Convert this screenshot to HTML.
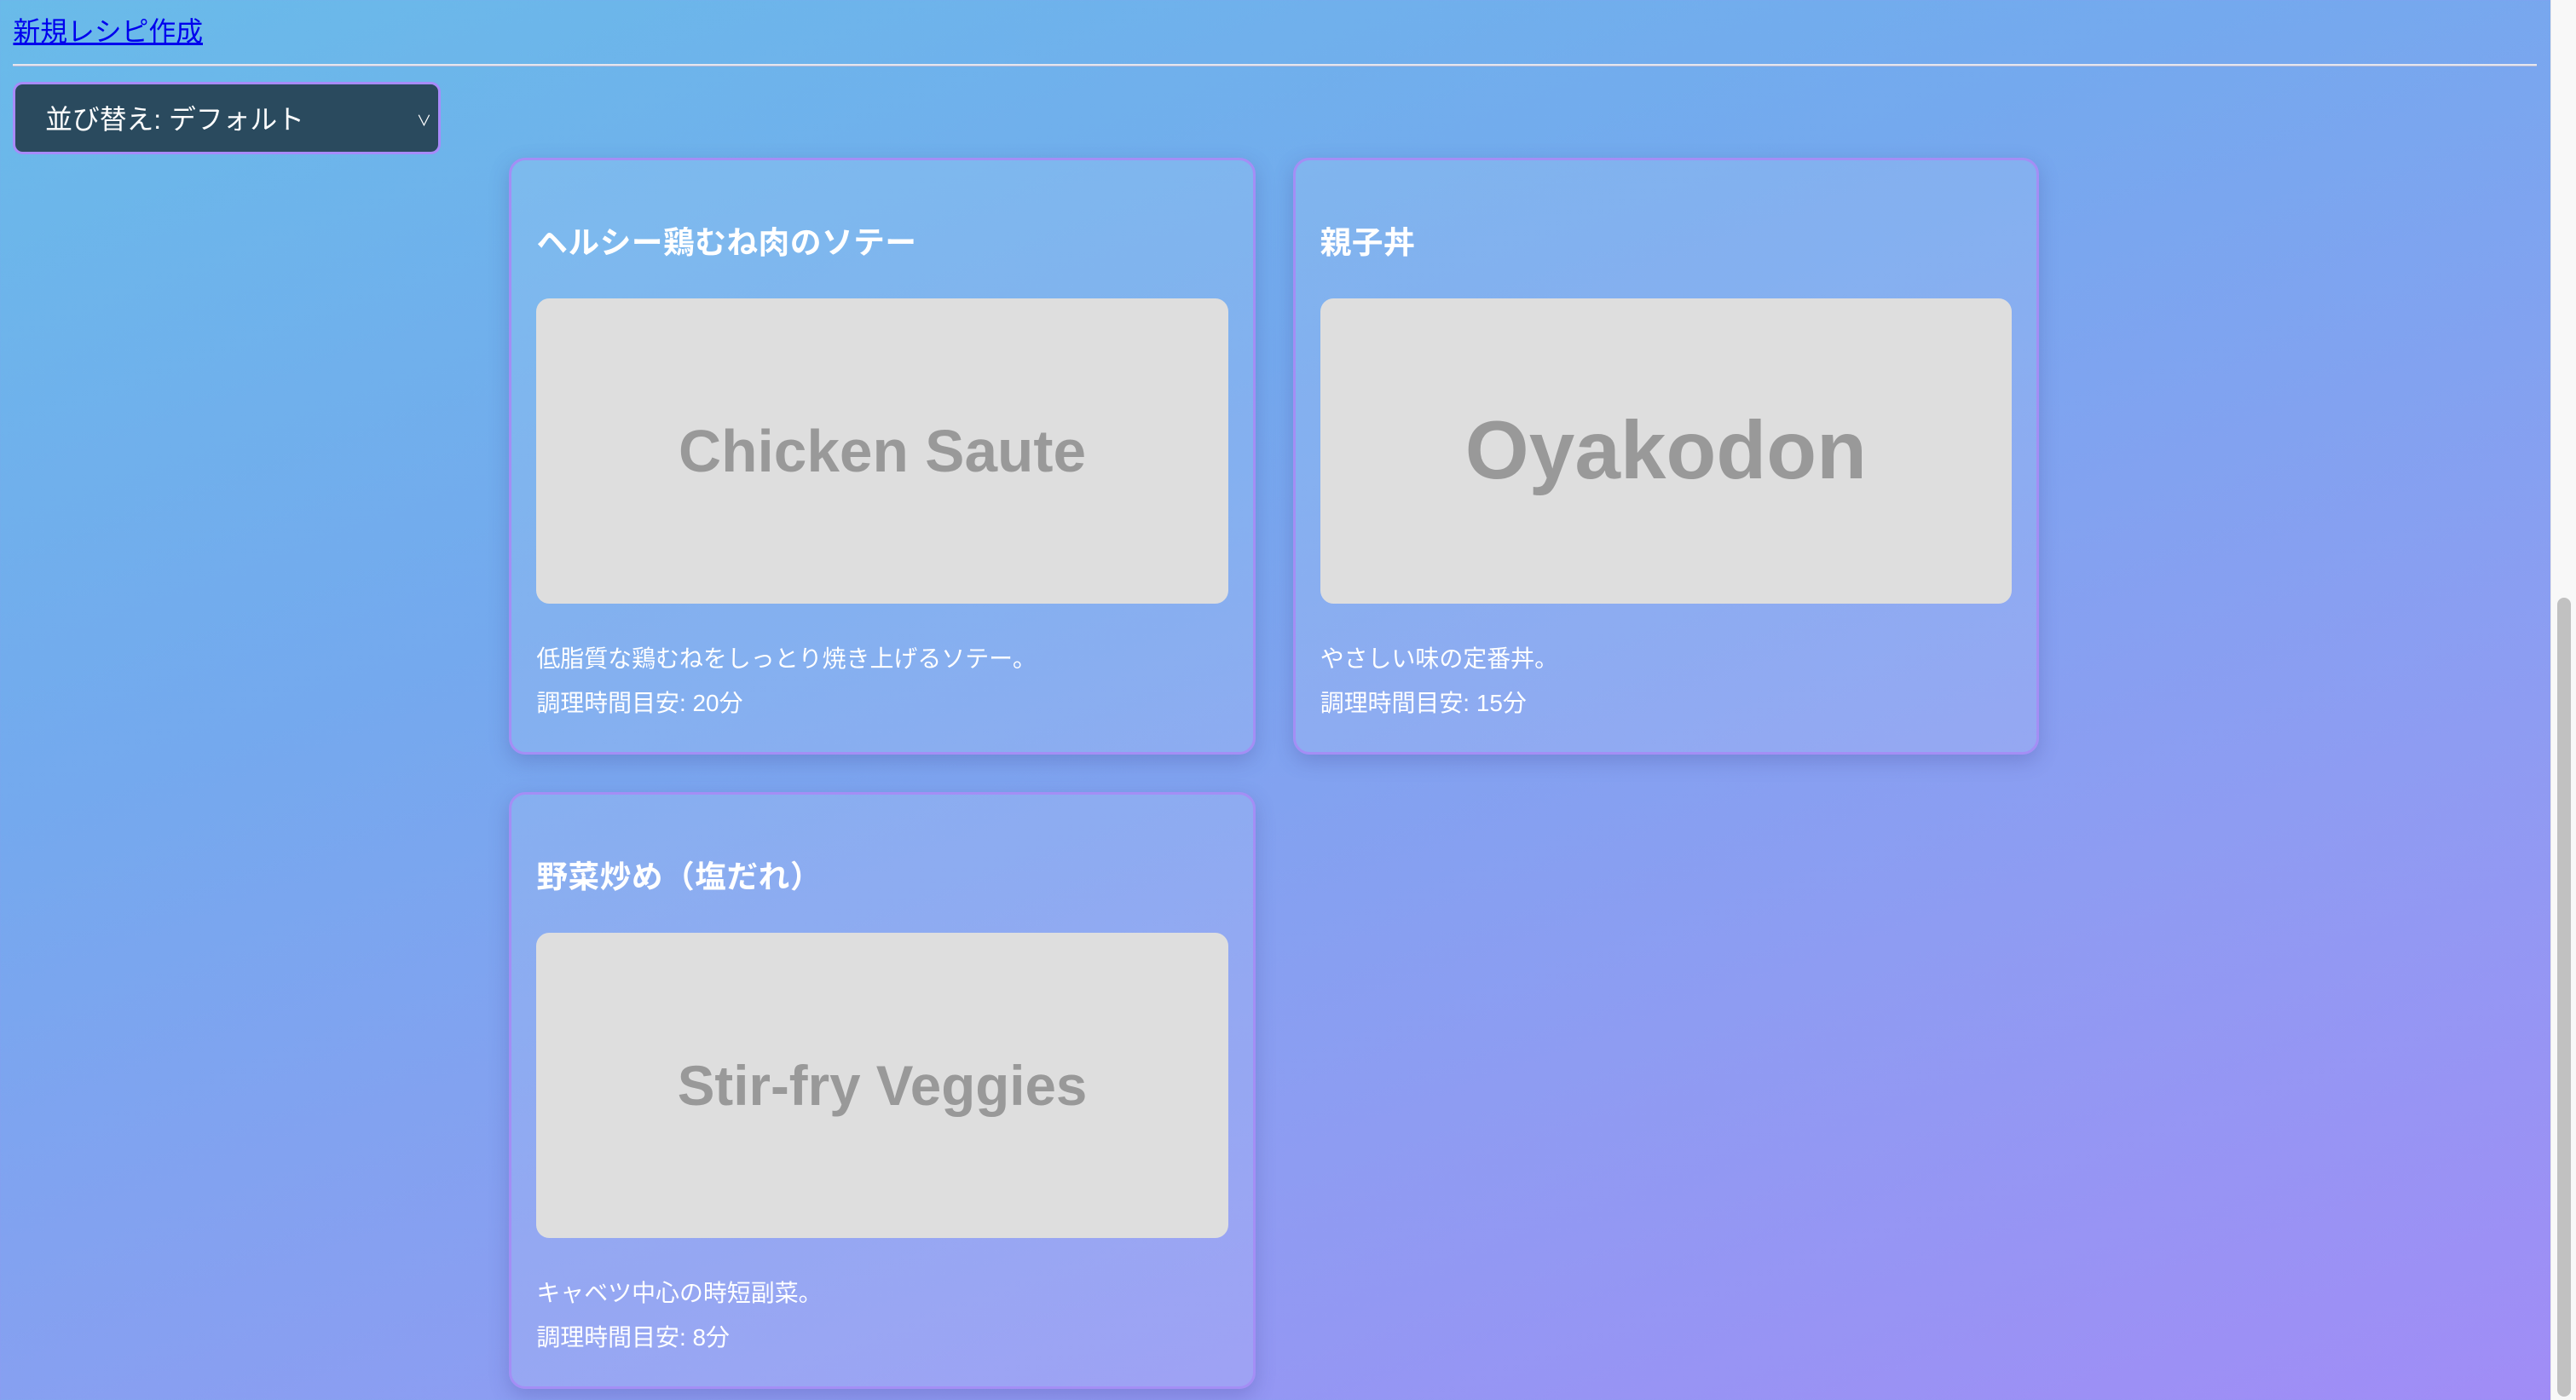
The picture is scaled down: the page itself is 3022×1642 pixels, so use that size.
<!DOCTYPE html>
<html><head><meta charset="utf-8"><style>
html,body{margin:0;padding:0;width:3022px;height:1642px;overflow:hidden}
body{background:linear-gradient(160deg,#69bbe9 0%,#74a9ee 35%,#8e9cf2 70%,#a18cf6 100%);font-family:"Liberation Sans","Noto Sans CJK JP",sans-serif;position:relative}
#z{zoom:1.9273;position:absolute;left:0;top:0;width:1552px;height:852px}
a{position:absolute;left:8px;top:6px;color:#0000ee;font-size:16.5px;text-decoration:underline}
.hr{position:absolute;left:8px;top:39px;width:1536px;height:1px;background:#e6e6ee;border-bottom:1px solid #b0b8d8}
.sel{position:absolute;left:8px;top:50px;width:257px;height:41px;background:#2a4a5e;border:2px solid #a78bfa;border-radius:6px;color:#fff;font-size:16.5px}
.sel span{position:absolute;left:18px;top:8px}
.sel i{position:absolute;right:4px;top:15px;font-style:normal;font-size:9px}
.card{position:absolute;width:451px;height:360px;border:2px solid #a48ef5;border-radius:10px;background:rgba(255,255,255,0.1);box-shadow:0 4px 12px rgba(60,60,140,0.25);color:#fff}
.card h3{position:absolute;left:15px;top:35px;margin:0;font-size:19px;font-weight:bold;letter-spacing:0.3px}
.img{position:absolute;left:15px;top:84px;width:421px;height:186px;background:#dedede;border-radius:8px;display:flex;align-items:center;justify-content:center;color:#999;font-weight:bold;font-size:36px}
.d{position:absolute;left:15px;top:292px;font-size:14.5px}
.t{position:absolute;left:15px;top:319px;font-size:14.5px}
#sb{position:absolute;left:2992px;top:0;width:30px;height:1642px;background:#f8f8f8;border-left:1px solid #e8e8e8}
#th{position:absolute;left:3000px;top:701px;width:16px;height:937px;background:#c1c1c1;border-radius:8px}
</style></head><body>
<div id="z">
<a>新規レシピ作成</a>
<div class="hr"></div>
<div class="sel"><span>並び替え: デフォルト</span><i>∨</i></div>
<div class="card" style="left:310px;top:96px"><h3>ヘルシー鶏むね肉のソテー</h3><div class="img">Chicken Saute</div><div class="d">低脂質な鶏むねをしっとり焼き上げるソテー。</div><div class="t">調理時間目安: 20分</div></div>
<div class="card" style="left:787px;top:96px"><h3>親子丼</h3><div class="img" style="font-size:50px">Oyakodon</div><div class="d">やさしい味の定番丼。</div><div class="t">調理時間目安: 15分</div></div>
<div class="card" style="left:310px;top:482px"><h3>野菜炒め（塩だれ）</h3><div class="img" style="font-size:34px">Stir-fry Veggies</div><div class="d">キャベツ中心の時短副菜。</div><div class="t">調理時間目安: 8分</div></div>
</div>
<div id="sb"></div><div id="th"></div>
</body></html>
